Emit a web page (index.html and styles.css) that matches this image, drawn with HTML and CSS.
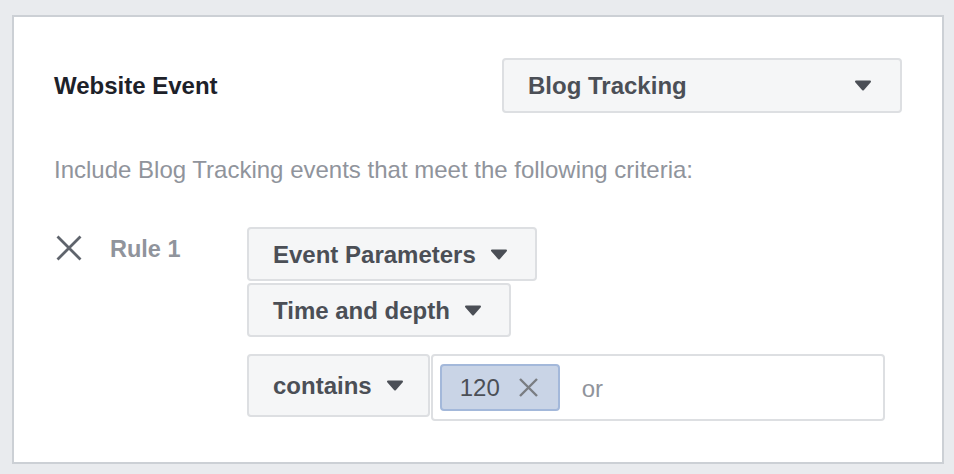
FILE: index.html
```html
<!DOCTYPE html>
<html lang="en">
<head>
<meta charset="utf-8">
<title>Website Event</title>
<link rel="stylesheet" href="styles.css">
</head>
<body>
<div class="card">
  <div class="header">
    <div class="label">Website Event</div>
    <div class="select">
      <span>Blog Tracking</span>
      <svg class="caret" width="18" height="11" viewBox="0 0 18 11"><path d="M2 1.5 H16 L9 9.5 Z" fill="#4b4f56" stroke="#4b4f56" stroke-width="2" stroke-linejoin="round"/></svg>
    </div>
  </div>
  <div class="desc">Include Blog Tracking events that meet the following criteria:</div>
  <div class="rule">
    <div class="rule-head">
      <svg class="remove" width="26" height="26" viewBox="0 0 26 26"><path d="M1.5 1.5 L24.5 24.5 M24.5 1.5 L1.5 24.5" stroke="#5f646c" stroke-width="2.8" fill="none"/></svg>
      <span class="rule-name">Rule 1</span>
    </div>
    <div class="rule-body">
      <div class="btn">
        <span>Event Parameters</span>
        <svg class="caret" width="18" height="11" viewBox="0 0 18 11"><path d="M2 1.5 H16 L9 9.5 Z" fill="#4b4f56" stroke="#4b4f56" stroke-width="2" stroke-linejoin="round"/></svg>
      </div>
      <div class="btn second">
        <span>Time and depth</span>
        <svg class="caret" width="18" height="11" viewBox="0 0 18 11"><path d="M2 1.5 H16 L9 9.5 Z" fill="#4b4f56" stroke="#4b4f56" stroke-width="2" stroke-linejoin="round"/></svg>
      </div>
      <div class="cond">
        <div class="btn tall">
          <span>contains</span>
          <svg class="caret" width="18" height="11" viewBox="0 0 18 11"><path d="M2 1.5 H16 L9 9.5 Z" fill="#4b4f56" stroke="#4b4f56" stroke-width="2" stroke-linejoin="round"/></svg>
        </div>
        <div class="input">
          <div class="token">
            <span>120</span>
            <svg width="19" height="19" viewBox="0 0 19 19"><path d="M1 1 L18 18 M18 1 L1 18" stroke="#7a7d82" stroke-width="2.4" fill="none"/></svg>
          </div>
          <span class="or">or</span>
        </div>
      </div>
    </div>
  </div>
</div>
</body>
</html>
```

FILE: styles.css
```css
html, body {
  margin: 0;
  padding: 0;
  background: #e9ebee;
}
body {
  font-family: "Liberation Sans", Arial, sans-serif;
  font-size: 24px;
  line-height: 29px;
  width: 954px;
  height: 474px;
  overflow: hidden;
  padding-top: 15px;
  padding-left: 12px;
  box-sizing: border-box;
}
.card {
  width: 932px;
  height: 449px;
  box-sizing: border-box;
  border: 2px solid #ccd0d5;
  background: #fff;
  padding: 41px 40px 0 40px;
}
.header {
  display: flex;
  justify-content: space-between;
  align-items: center;
}
.label {
  font-weight: bold;
  color: #1d2129;
}
.select {
  width: 400px;
  height: 55px;
  box-sizing: border-box;
  border: 2px solid #dddfe2;
  border-radius: 4px;
  background: #f5f6f7;
  display: flex;
  align-items: center;
  justify-content: space-between;
  padding: 0 28px 0 24px;
  font-weight: bold;
  color: #4b4f56;
}
.caret {
  display: block;
  flex: none;
}
.desc {
  margin-top: 42px;
  color: #90949c;
}
.rule {
  display: flex;
  margin-top: 43px;
}
.rule-head {
  width: 193px;
  height: 44px;
  display: flex;
  align-items: center;
  flex: none;
}
.remove {
  display: block;
  margin-left: 2px;
  margin-top: -2px;
}
.rule-name {
  margin-left: 28px;
  font-weight: bold;
  font-size: 23.5px;
  color: #90949c;
}
.rule-body {
  display: flex;
  flex-direction: column;
  align-items: flex-start;
}
.btn {
  height: 54px;
  box-sizing: border-box;
  border: 2px solid #dddfe2;
  border-radius: 4px;
  background: #f5f6f7;
  display: flex;
  align-items: center;
  gap: 14px;
  padding: 0 27px 0 24px;
  font-weight: bold;
  color: #4b4f56;
}
.btn.second {
  margin-top: 2px;
}
.cond {
  margin-top: 17px;
  display: flex;
  align-items: flex-start;
}
.btn.tall {
  height: 63px;
  padding-right: 24px;
}
.input {
  margin-left: 1px;
  width: 454px;
  height: 67px;
  box-sizing: border-box;
  border: 2px solid #dddfe2;
  border-radius: 4px;
  background: #fff;
  padding: 8px 7px;
  display: flex;
  align-items: flex-start;
}
.token {
  height: 47px;
  box-sizing: border-box;
  border: 2px solid #a3b8da;
  border-radius: 4px;
  background: #c9d4e6;
  display: flex;
  align-items: center;
  gap: 19px;
  padding: 0 20px 0 18px;
  color: #4b4f56;
}
.token svg {
  display: block;
}
.or {
  margin-left: 22px;
  margin-top: 10px;
  color: #90949c;
}
```
